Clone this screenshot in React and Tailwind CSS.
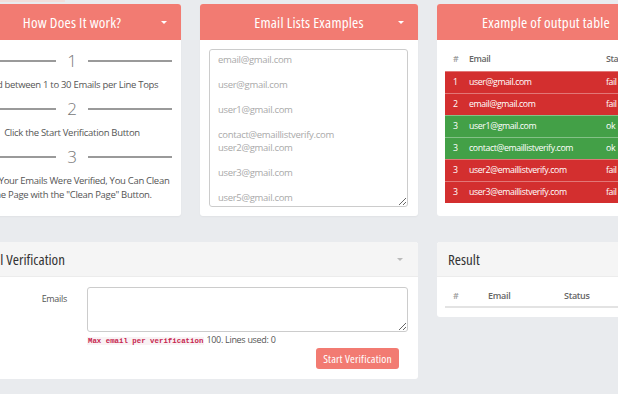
export default function App() {
  const rows = [
    { n: "1", e: "user@gmail.com", s: "fail", ok: false },
    { n: "2", e: "email@gmail.com", s: "fail", ok: false },
    { n: "3", e: "user1@gmail.com", s: "ok", ok: true },
    { n: "3", e: "contact@emaillistverify.com", s: "ok", ok: true },
    { n: "3", e: "user2@emaillistverify.com", s: "fail", ok: false },
    { n: "3", e: "user3@emaillistverify.com", s: "fail", ok: false },
  ];
  const placeholder =
    "email@gmail.com\n\nuser@gmail.com\n\nuser1@gmail.com\n\ncontact@emaillistverify.com\nuser2@gmail.com\n\nuser3@gmail.com\n\nuser5@gmail.com";

  const Step = ({ n }) => (
    <div className="flex items-center h-[22px]">
      <span className="flex-1 h-[2px] bg-[#9a9a9a]" />
      <span className="mx-[11px] text-[17px] leading-[22px] text-[#777] font-light">{n}</span>
      <span className="flex-1 h-[2px] bg-[#9a9a9a]" />
    </div>
  );

  const ColorPanel = ({ title, children }) => (
    <div className="w-[218px] h-[212px] flex flex-col bg-white rounded-[3px] overflow-hidden shadow-[0_1px_2px_rgba(0,0,0,0.04)]">
      <div className="relative h-[36px] shrink-0 bg-[#f27b72] flex items-center justify-center text-white text-[15px] tracking-[0.2px] font-stretch-[75%]">
        {title}
        <span className="absolute right-[14px] top-[17px] border-x-[3px] border-x-transparent border-t-[3px] border-t-white" />
      </div>
      {children}
    </div>
  );

  return (
    <div className="w-[618px] h-[394px] overflow-hidden bg-[#e9ebee] font-['Open_Sans',sans-serif]">
      <div className="h-[2px] w-[65px] bg-[#f1dedb]" />
      <div className="ml-[-37px] w-[711px] pt-[2px]">
        <div className="flex gap-[19px]">
          <ColorPanel title="How Does It work?">
            <div className="px-[9px] pt-[10px] text-[9.5px] tracking-[-0.3px] leading-[14px] text-[#555] text-center">
              <Step n="1" />
              <p className="mt-[6px]">Add between 1 to 30 Emails per Line Tops</p>
              <div className="mt-[6px]"><Step n="2" /></div>
              <p className="mt-[6px]">Click the Start Verification Button</p>
              <div className="mt-[6px]"><Step n="3" /></div>
              <p className="mt-[6px]">
                Once Your Emails Were Verified, You Can Clean the Page with the "Clean Page" Button.
              </p>
            </div>
          </ColorPanel>

          <ColorPanel title="Email Lists Examples">
            <div className="pl-[9px] pr-[10px] pt-[9px]">
              <textarea
                readOnly
                placeholder={placeholder}
                className="block w-full h-[158px] border border-[#ccc] rounded-[3px] px-[8px] pt-[4px] text-[9.5px] tracking-[-0.3px] leading-[12.5px] placeholder:text-[#a9a9a9] resize-y overflow-hidden"
              />
            </div>
          </ColorPanel>

          <div className="w-[218px] h-[212px] flex flex-col bg-white rounded-[3px] overflow-hidden">
            <div className="h-[36px] shrink-0 bg-[#f27b72] flex items-center justify-center text-white text-[15px] tracking-[0.2px] font-stretch-[75%]">
              Example of output table
            </div>
            <div className="px-[8px] pt-[9px] text-[8.8px] tracking-[-0.4px]">
              <div className="flex items-center h-[22px] font-semibold text-[#666]">
                <span className="w-[24px] pl-[8px] text-[#999]">#</span>
                <span className="w-[137px]">Email</span>
                <span>Status</span>
              </div>
              {rows.map((r, i) => (
                <div
                  key={i}
                  className={
                    "flex items-center h-[22px] text-white border-t border-t-[rgba(255,255,255,0.35)] " +
                    (r.ok ? "bg-[#43a047]" : "bg-[#d32f2f]")
                  }
                >
                  <span className="w-[24px] pl-[8px]">{r.n}</span>
                  <span className="w-[137px]">{r.e}</span>
                  <span>{r.s}</span>
                </div>
              ))}
            </div>
          </div>
        </div>

        <div className="flex gap-[19px] mt-[26px] items-start">
          <div className="w-[455px] bg-white rounded-[3px] overflow-hidden">
            <div className="relative h-[35px] bg-[#f5f5f5] border-b border-[#ececec] flex items-center pl-[12px] text-[15px] text-[#333] font-stretch-[75%]">
              Email Verification
              <span className="absolute right-[15px] top-[16px] border-x-[3px] border-x-transparent border-t-[3px] border-t-[#bbb]" />
            </div>
            <div className="pl-[9px] pr-[10px] pt-[10px] pb-[10px]">
              <div className="flex">
                <div className="w-[95px] shrink-0 text-right pt-[5px] text-[9px] tracking-[-0.3px] leading-[14px] text-[#555]">Emails</div>
                <div className="ml-[20px] flex-1">
                  <textarea
                    readOnly
                    className="block w-full h-[45px] border border-[#ccc] rounded-[3px] resize-y"
                  />
                  <div className="mt-[2px] text-[9px] tracking-[-0.3px] leading-[12px] text-[#555]">
                    <code className="font-['Liberation_Mono',monospace] tracking-normal text-[7.4px] font-bold text-[#c7254e] bg-[#f9f2f4] px-[1px]">
                      Max email per verification
                    </code>{" "}
                    100. Lines used: 0
                  </div>
                </div>
              </div>
              <div className="flex justify-end mt-[1px]">
                <button className="mr-[9px] h-[21px] w-[83px] bg-[#f27b72] text-white text-[11.5px] tracking-[0.15px] font-stretch-[75%] rounded-[3px]">
                  Start Verification
                </button>
              </div>
            </div>
          </div>

          <div className="w-[218px] bg-white rounded-[3px] overflow-hidden">
            <div className="h-[35px] bg-[#f5f5f5] border-b border-[#ececec] flex items-center pl-[11px] text-[15px] text-[#333] font-stretch-[75%]">
              Result
            </div>
            <div className="px-[8px] pt-[9px] pb-[9px]">
              <div className="flex items-center h-[22px] border-b-[2px] border-[#e3e3e3] text-[9px] tracking-[-0.3px] font-semibold text-[#666]">
                <span className="w-[43px] pl-[8px] text-[#999]">#</span>
                <span className="w-[76px]">Email</span>
                <span>Status</span>
              </div>
            </div>
          </div>
        </div>
      </div>
    </div>
  );
}
